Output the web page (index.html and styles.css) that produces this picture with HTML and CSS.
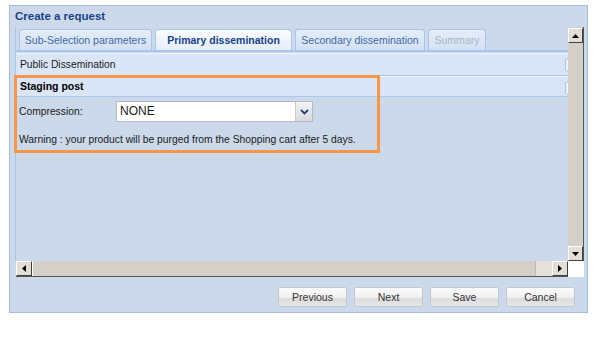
FILE: index.html
```html
<!DOCTYPE html>
<html lang="en">
<head>
    <meta charset="UTF-8">
    <title>Create a request</title>
    <link rel="stylesheet" href="styles.css">
</head>
<body>
    <div class="window">
        <div class="win-title">Create a request</div>

        <div class="scroll-frame">
            <div class="viewport">
                <div class="tabs">
                    <div class="tab">Sub-Selection parameters</div>
                    <div class="tab active">Primary dissemination</div>
                    <div class="tab">Secondary dissemination</div>
                    <div class="tab disabled">Summary</div>
                </div>
                <div class="panel">
                    <div class="section-head">Public Dissemination<span class="tool"></span></div>
                    <div class="section-head strong">Staging post<span class="tool"></span></div>
                    <div class="form">
                        <div class="field-row">
                            <label class="field-label">Compression:</label>
                            <div class="select">
                                <span class="select-value">NONE</span>
                                <span class="select-btn">
                                    <svg width="9" height="6" viewBox="0 0 9 6"><path d="M1 1 L4.5 4.5 L8 1" fill="none" stroke="#15428b" stroke-width="1.8"/></svg>
                                </span>
                            </div>
                        </div>
                        <p class="warning">Warning : your product will be purged from the Shopping cart after 5 days.</p>
                    </div>
                </div>
            </div>

            <div class="vscroll">
                <div class="sb-btn"><svg width="7" height="4" viewBox="0 0 7 4"><path d="M0 4 L3.5 0 L7 4 Z" fill="#000"/></svg></div>
                <div class="sb-track"></div>
                <div class="sb-btn"><svg width="7" height="4" viewBox="0 0 7 4"><path d="M0 0 L3.5 4 L7 0 Z" fill="#000"/></svg></div>
            </div>
            <div class="hscroll">
                <div class="sb-btn"><svg width="4" height="7" viewBox="0 0 4 7"><path d="M4 0 L0 3.5 L4 7 Z" fill="#000"/></svg></div>
                <div class="sb-track"></div>
                <div class="sb-thumb"></div>
                <div class="sb-btn"><svg width="4" height="7" viewBox="0 0 4 7"><path d="M0 0 L4 3.5 L0 7 Z" fill="#000"/></svg></div>
            </div>
            <div class="corner"></div>
        </div>

        <div class="win-buttons">
            <button class="btn">Previous</button>
            <button class="btn">Next</button>
            <button class="btn">Save</button>
            <button class="btn">Cancel</button>
        </div>

        <div class="highlight"></div>
    </div>
</body>
</html>
```

FILE: styles.css
```css
body{
    margin: 0;
    background-color: #ffffff;
    font-family: "Liberation Sans", Arial, sans-serif;
    font-size: 10.3px;
    color: #1a1a1a;
}

.window{
    position: relative;
    box-sizing: border-box;
    margin: 5px 0 0 9px;
    width: 579px;
    height: 308px;
    border: 1px solid #a3bde0;
    background-color: #cbd9ea;
    display: flex;
    flex-direction: column;
}

.win-title{
    height: 21px;
    line-height: 20px;
    padding-left: 5px;
    font-weight: bold;
    font-size: 11.5px;
    color: #15428b;
    background-color: #cdd9ea;
}

.scroll-frame{
    margin-left: 5px;
    width: 569px;
    height: 250px;
    display: grid;
    grid-template-columns: 1fr 16px;
    grid-template-rows: 1fr 16px;
}

.viewport{
    overflow: hidden;
    border-left: 1px solid #a9c4ea;
    display: flex;
    flex-direction: column;
}

.tabs{
    display: flex;
    gap: 3px;
    padding: 2px 0 0 3px;
    border-bottom: 2px solid #a9c6ef;
}

.tab{
    box-sizing: border-box;
    height: 21px;
    line-height: 21px;
    text-align: center;
    white-space: nowrap;
    font-size: 10.5px;
    border: 1px solid #a9c4ea;
    border-bottom: none;
    border-radius: 3px 3px 0 0;
    background: linear-gradient(#e4edf9, #d3e1f4);
    color: #416aa3;
}

.tab:nth-child(1){ width: 133px; }
.tab:nth-child(2){ width: 137px; }
.tab:nth-child(3){ width: 130px; }
.tab:nth-child(4){ width: 58px; }

.tab.active{
    background: linear-gradient(#fafcff, #e6eefa);
    color: #15428b;
    font-weight: bold;
}

.tab.disabled{
    color: #a8b4c4;
}

.panel{
    flex: 1;
    display: flex;
    flex-direction: column;
    padding-top: 1px;
}

.section-head{
    position: relative;
    height: 21px;
    line-height: 21px;
    padding-left: 4px;
    background-color: #dae6f7;
    border-top: 1px solid #f2f6fc;
    border-bottom: 1px solid #a9c6ef;
    color: #1b1b1b;
}

.section-head.strong{
    font-weight: bold;
    font-size: 10.5px;
    color: #000;
    height: 19px;
    line-height: 19px;
}

.tool{
    position: absolute;
    right: -5px;
    top: 4px;
    width: 6px;
    height: 12px;
    border: 1px solid #a9c4ea;
    border-radius: 3px;
    background-color: #eef4fc;
}

.form{
    padding: 4px 0 0 3px;
}

.field-row{
    display: flex;
    align-items: center;
    height: 21px;
}

.field-label{
    width: 97px;
}

.select{
    box-sizing: border-box;
    width: 197px;
    height: 21px;
    display: flex;
    border: 1px solid #b5b8c8;
    background-color: #fff;
}

.select-value{
    flex: 1;
    padding-left: 3px;
    line-height: 19px;
    font-size: 12px;
}

.select-btn{
    width: 16px;
    display: flex;
    align-items: center;
    justify-content: center;
    background: linear-gradient(#f4f4f4, #d9d9d9);
    border-left: 1px solid #c7c7c7;
}

.warning{
    margin: 12px 0 0 0;
}

.vscroll{
    display: flex;
    flex-direction: column;
    background-color: #d4d0c8;
    border-right: 1px solid #555;
    padding-top: 1px;
}

.hscroll{
    display: flex;
    background-color: #d4d0c8;
    border-bottom: 1px solid #555;
    margin-left: 1px;
}

.sb-btn{
    box-sizing: border-box;
    flex: 0 0 15px;
    height: 15px;
    display: flex;
    align-items: center;
    justify-content: center;
    background-color: #e2ded6;
    border: 1px solid;
    border-color: #ffffff #404040 #404040 #ffffff;
}

.vscroll .sb-btn{
    width: 15px;
}

.hscroll .sb-btn{
    width: 15px;
    flex-basis: 16px;
}

.sb-track{
    flex: 1;
    background-color: #d4d0c8;
}

.hscroll .sb-track{
    border-left: 1px solid #ffffff;
}

.sb-thumb{
    width: 16px;
    background-color: #e4e1db;
    border-left: 1px solid #c0bcb4;
}

.corner{
    background-color: #ffffff;
}

.win-buttons{
    display: flex;
    justify-content: flex-end;
    gap: 7px;
    padding: 10px 12px 0 0;
}

.btn{
    width: 69px;
    height: 20px;
    padding: 0;
    font-family: "Liberation Sans", Arial, sans-serif;
    font-size: 10.5px;
    color: #333;
    border: 1px solid #c4c8ce;
    border-radius: 2px;
    background: linear-gradient(#fbfbfb 0%, #efefef 55%, #dcdcdc 56%, #e6e6e6 100%);
}

.highlight{
    position: absolute;
    left: 4px;
    top: 69px;
    box-sizing: border-box;
    width: 366px;
    height: 78px;
    border: 3px solid #f79646;
}
```
